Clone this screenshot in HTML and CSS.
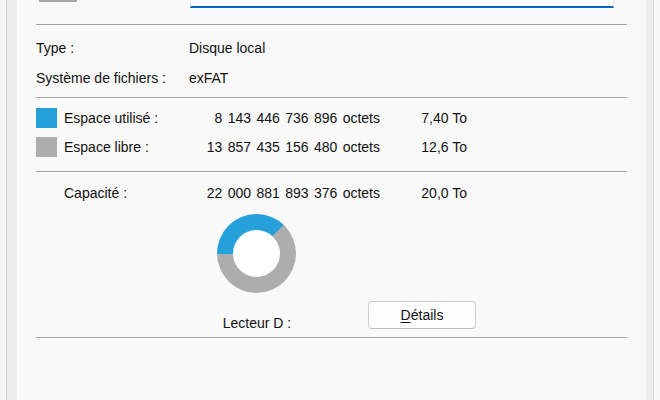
FILE: index.html
```html
<!DOCTYPE html>
<html lang="fr">
<head>
<meta charset="utf-8">
<title>Propriétés du disque</title>
<link rel="stylesheet" href="styles.css">
</head>
<body>
<div class="window">
  <div class="panel">
    <div class="top">
      <div class="drive-icon"></div>
      <div class="name-box"></div>
    </div>
    <div class="sep sep-first"></div>
    <div class="info">
      <span>Type :</span><span>Disque local</span>
      <span>Système de fichiers :</span><span>exFAT</span>
    </div>
    <div class="sep"></div>
    <div class="usage">
      <span class="swatch swatch-used"></span>
      <span>Espace utilisé :</span>
      <span class="bytes">8 143 446 736 896 octets</span>
      <span class="size">7,40 To</span>
      <span class="swatch swatch-free"></span>
      <span>Espace libre :</span>
      <span class="bytes">13 857 435 156 480 octets</span>
      <span class="size">12,6 To</span>
    </div>
    <div class="sep"></div>
    <div class="usage capacity">
      <span></span>
      <span>Capacité :</span>
      <span class="bytes">22 000 881 893 376 octets</span>
      <span class="size">20,0 To</span>
    </div>
    <div class="chart">
      <div class="donut"></div>
      <span class="drive-label">Lecteur D :</span>
      <button class="details" type="button"><u>D</u>étails</button>
    </div>
    <div class="sep sep-last"></div>
  </div>
</div>
</body>
</html>
```

FILE: styles.css
```css
html, body {
  margin: 0;
  padding: 0;
}

body {
  background: #f7f7f7;
  font-family: "Liberation Sans", Arial, sans-serif;
  font-size: 14px;
  color: #111;
}

.window {
  margin: 0 6px;
  height: 400px;
  box-sizing: border-box;
  border-left: 1px solid #d2d2d2;
  border-right: 1px solid #d2d2d2;
  background: #ececec;
  padding: 0 7px 0 10px;
}

.panel {
  background: #f9f9f9;
  height: 100%;
  padding: 0 19px;
}

.top {
  display: flex;
  align-items: flex-start;
  height: 8px;
}

.drive-icon {
  width: 38px;
  height: 2px;
  margin-left: 3px;
  background: #a8a8a8;
}

.name-box {
  margin-left: 113px;
  width: 422px;
  height: 6px;
  background: #ffffff;
  border-left: 1px solid #e3e3e3;
  border-right: 1px solid #e3e3e3;
  border-bottom: 2px solid #0067c0;
}

.sep {
  height: 0;
  border-top: 1px solid #a0a0a0;
  border-bottom: 1px solid #ffffff;
}

.sep-first {
  margin-top: 16px;
}

.sep-last {
  margin-top: 4px;
}

.info {
  display: grid;
  grid-template-columns: 153px auto;
  grid-auto-rows: 30px;
  align-items: center;
  padding: 7px 0 4px;
}

.usage {
  display: grid;
  grid-template-columns: 28px 120px 196px 87px;
  grid-auto-rows: 29px;
  align-items: center;
  padding: 4px 0 10px;
}

.capacity {
  grid-auto-rows: 28px;
  padding: 6px 0 0;
}

.swatch {
  width: 21px;
  height: 20px;
}

.swatch-used {
  background: #26a0da;
}

.swatch-free {
  background: #adadad;
}

.bytes {
  justify-self: end;
  word-spacing: 1.5px;
  white-space: nowrap;
}

.size {
  justify-self: end;
  white-space: nowrap;
}

.chart {
  display: grid;
  grid-template-columns: 181px 80px auto;
  margin-top: 7px;
}

.donut {
  grid-column: 2;
  grid-row: 1;
  width: 79px;
  height: 79px;
  border-radius: 50%;
  background: conic-gradient(from 270deg, #26a0da 0 37%, #adadad 37% 100%);
  display: flex;
  align-items: center;
  justify-content: center;
}

.donut::after {
  content: "";
  width: 47px;
  height: 47px;
  border-radius: 50%;
  background: #ffffff;
}

.drive-label {
  grid-column: 2;
  grid-row: 2;
  justify-self: center;
  white-space: nowrap;
  line-height: 20px;
  margin-top: 20px;
}

.details {
  grid-column: 3;
  grid-row: 2;
  justify-self: start;
  align-self: start;
  margin: 8px 0 0 71px;
  width: 108px;
  height: 28px;
  box-sizing: border-box;
  border: 1px solid #d0d0d0;
  border-bottom-color: #bdbdbd;
  border-radius: 4px;
  background: #fdfdfd;
  font-family: "Liberation Sans", Arial, sans-serif;
  font-size: 14px;
  color: #111;
  padding: 0;
}

.details u {
  text-decoration-thickness: 1px;
  text-underline-offset: 2px;
}
```
